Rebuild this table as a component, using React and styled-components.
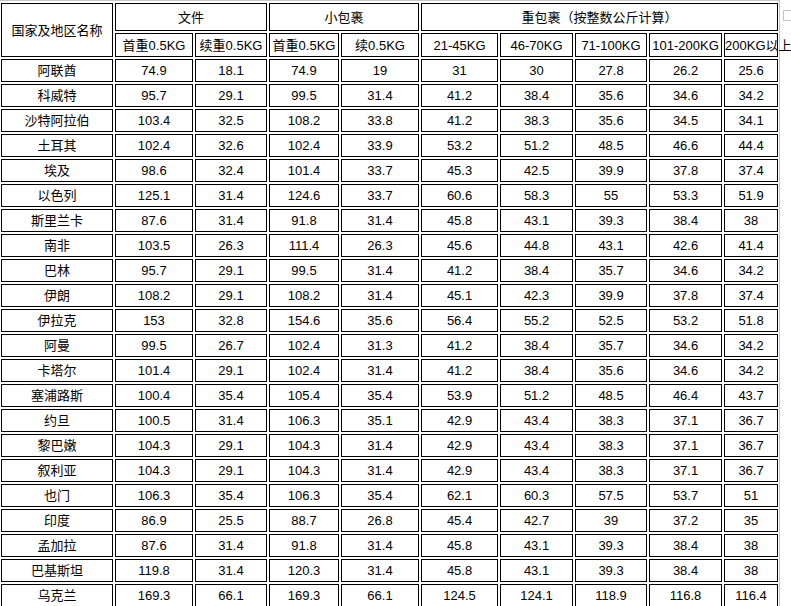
import React from 'react';
import styled, { createGlobalStyle } from 'styled-components';

const Global = createGlobalStyle`
    html, body {
        margin: 0;
        padding: 0;
        background: #fff;
    }
    body {
        font-family: "Liberation Sans", "Noto Sans CJK SC", sans-serif;
        font-size: 13px;
        color: #000;
        overflow: hidden;
    }
`

const Frame = styled.div`
    position: relative;
    width: 779px;
    height: 606px;
    border-top: 1px solid #c6c6c6;
    border-right: 1px solid #c6c6c6;
`
const Corner = styled.div`
    position: absolute;
    top: 9px;
    left: 783px;
    width: 7px;
    height: 9px;
    border: 1px solid #c6c6c6;
    border-right: none;
`
const Table = styled.table`
    table-layout: fixed;
    width: 781px;
    margin-left: -1px;
    border-collapse: separate;
    border-spacing: 2px;
`
const Col = styled.col`
    width: ${p => p.$w}px;
`
const Cell = styled.td`
    box-sizing: border-box;
    height: ${p => p.$h || 23}px;
    padding: 0;
    border: 1px solid #000;
    text-align: center;
    vertical-align: middle;
    white-space: nowrap;
    overflow: visible;
    line-height: 15px;
`

const widths = [112, 78, 72, 70, 78, 77, 73, 72, 73, 54];

const rows = [
    ['阿联酋', '74.9', '18.1', '74.9', '19', '31', '30', '27.8', '26.2', '25.6'],
    ['科威特', '95.7', '29.1', '99.5', '31.4', '41.2', '38.4', '35.6', '34.6', '34.2'],
    ['沙特阿拉伯', '103.4', '32.5', '108.2', '33.8', '41.2', '38.3', '35.6', '34.5', '34.1'],
    ['土耳其', '102.4', '32.6', '102.4', '33.9', '53.2', '51.2', '48.5', '46.6', '44.4'],
    ['埃及', '98.6', '32.4', '101.4', '33.7', '45.3', '42.5', '39.9', '37.8', '37.4'],
    ['以色列', '125.1', '31.4', '124.6', '33.7', '60.6', '58.3', '55', '53.3', '51.9'],
    ['斯里兰卡', '87.6', '31.4', '91.8', '31.4', '45.8', '43.1', '39.3', '38.4', '38'],
    ['南非', '103.5', '26.3', '111.4', '26.3', '45.6', '44.8', '43.1', '42.6', '41.4'],
    ['巴林', '95.7', '29.1', '99.5', '31.4', '41.2', '38.4', '35.7', '34.6', '34.2'],
    ['伊朗', '108.2', '29.1', '108.2', '31.4', '45.1', '42.3', '39.9', '37.8', '37.4'],
    ['伊拉克', '153', '32.8', '154.6', '35.6', '56.4', '55.2', '52.5', '53.2', '51.8'],
    ['阿曼', '99.5', '26.7', '102.4', '31.3', '41.2', '38.4', '35.7', '34.6', '34.2'],
    ['卡塔尔', '101.4', '29.1', '102.4', '31.4', '41.2', '38.4', '35.6', '34.6', '34.2'],
    ['塞浦路斯', '100.4', '35.4', '105.4', '35.4', '53.9', '51.2', '48.5', '46.4', '43.7'],
    ['约旦', '100.5', '31.4', '106.3', '35.1', '42.9', '43.4', '38.3', '37.1', '36.7'],
    ['黎巴嫩', '104.3', '29.1', '104.3', '31.4', '42.9', '43.4', '38.3', '37.1', '36.7'],
    ['叙利亚', '104.3', '29.1', '104.3', '31.4', '42.9', '43.4', '38.3', '37.1', '36.7'],
    ['也门', '106.3', '35.4', '106.3', '35.4', '62.1', '60.3', '57.5', '53.7', '51'],
    ['印度', '86.9', '25.5', '88.7', '26.8', '45.4', '42.7', '39', '37.2', '35'],
    ['孟加拉', '87.6', '31.4', '91.8', '31.4', '45.8', '43.1', '39.3', '38.4', '38'],
    ['巴基斯坦', '119.8', '31.4', '120.3', '31.4', '45.8', '43.1', '39.3', '38.4', '38'],
    ['乌克兰', '169.3', '66.1', '169.3', '66.1', '124.5', '124.1', '118.9', '116.8', '116.4'],
];

const subHeads = ['首重0.5KG', '续重0.5KG', '首重0.5KG', '续0.5KG', '21-45KG', '46-70KG', '71-100KG', '101-200KG', '200KG以上'];

const App = () => {
    return (
        <Frame>
            <Global />
            <Corner />
            <Table>
                <colgroup>
                    {widths.map((w, i) => <Col key={i} $w={w} />)}
                </colgroup>
                <tbody>
                    <tr>
                        <Cell rowSpan={2} $h={54}>国家及地区名称</Cell>
                        <Cell colSpan={2} $h={28}>文件</Cell>
                        <Cell colSpan={2} $h={28}>小包裹</Cell>
                        <Cell colSpan={5} $h={28}>重包裹（按整数公斤计算）</Cell>
                    </tr>
                    <tr>
                        {subHeads.map((t, i) => <Cell key={i} $h={24}>{t}</Cell>)}
                    </tr>
                    {rows.map((r, i) => (
                        <tr key={i}>
                            {r.map((v, j) => <Cell key={j}>{v}</Cell>)}
                        </tr>
                    ))}
                </tbody>
            </Table>
        </Frame>
    )
}

export default App
